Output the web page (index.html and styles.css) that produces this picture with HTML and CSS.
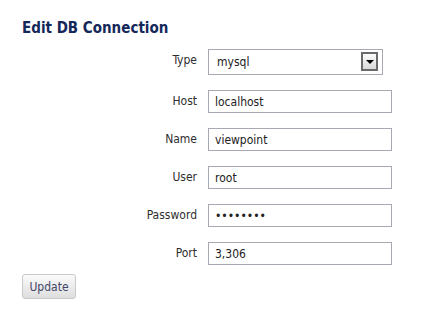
FILE: index.html
```html
<!DOCTYPE html>
<html lang="en">
<head>
  <meta charset="UTF-8" />
  <title>Edit DB Connection</title>
  <link rel="stylesheet" href="styles.css">
</head>
<body>
  <div class="page">
    <h2 class="title">Edit DB Connection</h2>

    <form class="conn-form">
      <label for="type">Type</label>
      <div class="select-wrap">
        <select id="type">
          <option>mysql</option>
          <option>pgsql</option>
          <option>sqlite</option>
        </select>
        <span class="select-btn"><span class="arrow"></span></span>
      </div>

      <label for="host">Host</label>
      <input type="text" id="host" value="localhost" />

      <label for="name">Name</label>
      <input type="text" id="name" value="viewpoint" />

      <label for="user">User</label>
      <input type="text" id="user" value="root" />

      <label for="pass">Password</label>
      <input type="password" id="pass" value="12345678" />

      <label for="port">Port</label>
      <input type="text" id="port" value="3,306" />
    </form>

    <button class="update-btn" type="button">Update</button>
  </div>
</body>
</html>
```

FILE: styles.css
```css
* {
  box-sizing: border-box;
  margin: 0;
  padding: 0;
}

body {
  font-family: "DejaVu Sans Condensed", "DejaVu Sans", Verdana, sans-serif;
  font-size: 12px;
  color: #333;
  background: #fff;
}

.page {
  padding: 18px 22px 0 22px;
}

.title {
  font-size: 15px;
  font-weight: bold;
  color: #15285a;
  line-height: 20px;
  margin-bottom: 11px;
}

.conn-form {
  display: grid;
  grid-template-columns: 175px 184px;
  column-gap: 11px;
  row-gap: 15px;
  align-items: start;
}

.conn-form label {
  text-align: right;
  line-height: 14px;
  padding-top: 4px;
  color: #2e2e2e;
}

.conn-form input {
  height: 23px;
  width: 184px;
  border: 1px solid #a7aab3;
  padding: 0 6px;
  font-family: inherit;
  font-size: 12px;
  color: #222;
  outline: none;
}

.select-wrap {
  position: relative;
  width: 175px;
  height: 26px;
}

.select-wrap select {
  appearance: none;
  -webkit-appearance: none;
  width: 100%;
  height: 100%;
  border: 1px solid #a7aab3;
  background: #fff;
  padding: 0 8px;
  font-family: inherit;
  font-size: 12px;
  color: #222;
  outline: none;
}

.select-btn {
  position: absolute;
  top: 3px;
  right: 5px;
  width: 17px;
  height: 19px;
  border: 2px solid #6a6a6a;
  background: linear-gradient(#fdfdfd, #d8d8d8);
  pointer-events: none;
  display: flex;
  align-items: center;
  justify-content: center;
}

.arrow {
  width: 0;
  height: 0;
  border-left: 4px solid transparent;
  border-right: 4px solid transparent;
  border-top: 4px solid #000;
}

.update-btn {
  margin-top: 9px;
  width: 54px;
  height: 25px;
  border: 1px solid #c9c9c9;
  border-radius: 3px;
  background: linear-gradient(#fafafa, #dedede);
  font-family: inherit;
  font-size: 12px;
  color: #44466a;
  cursor: pointer;
}
```
